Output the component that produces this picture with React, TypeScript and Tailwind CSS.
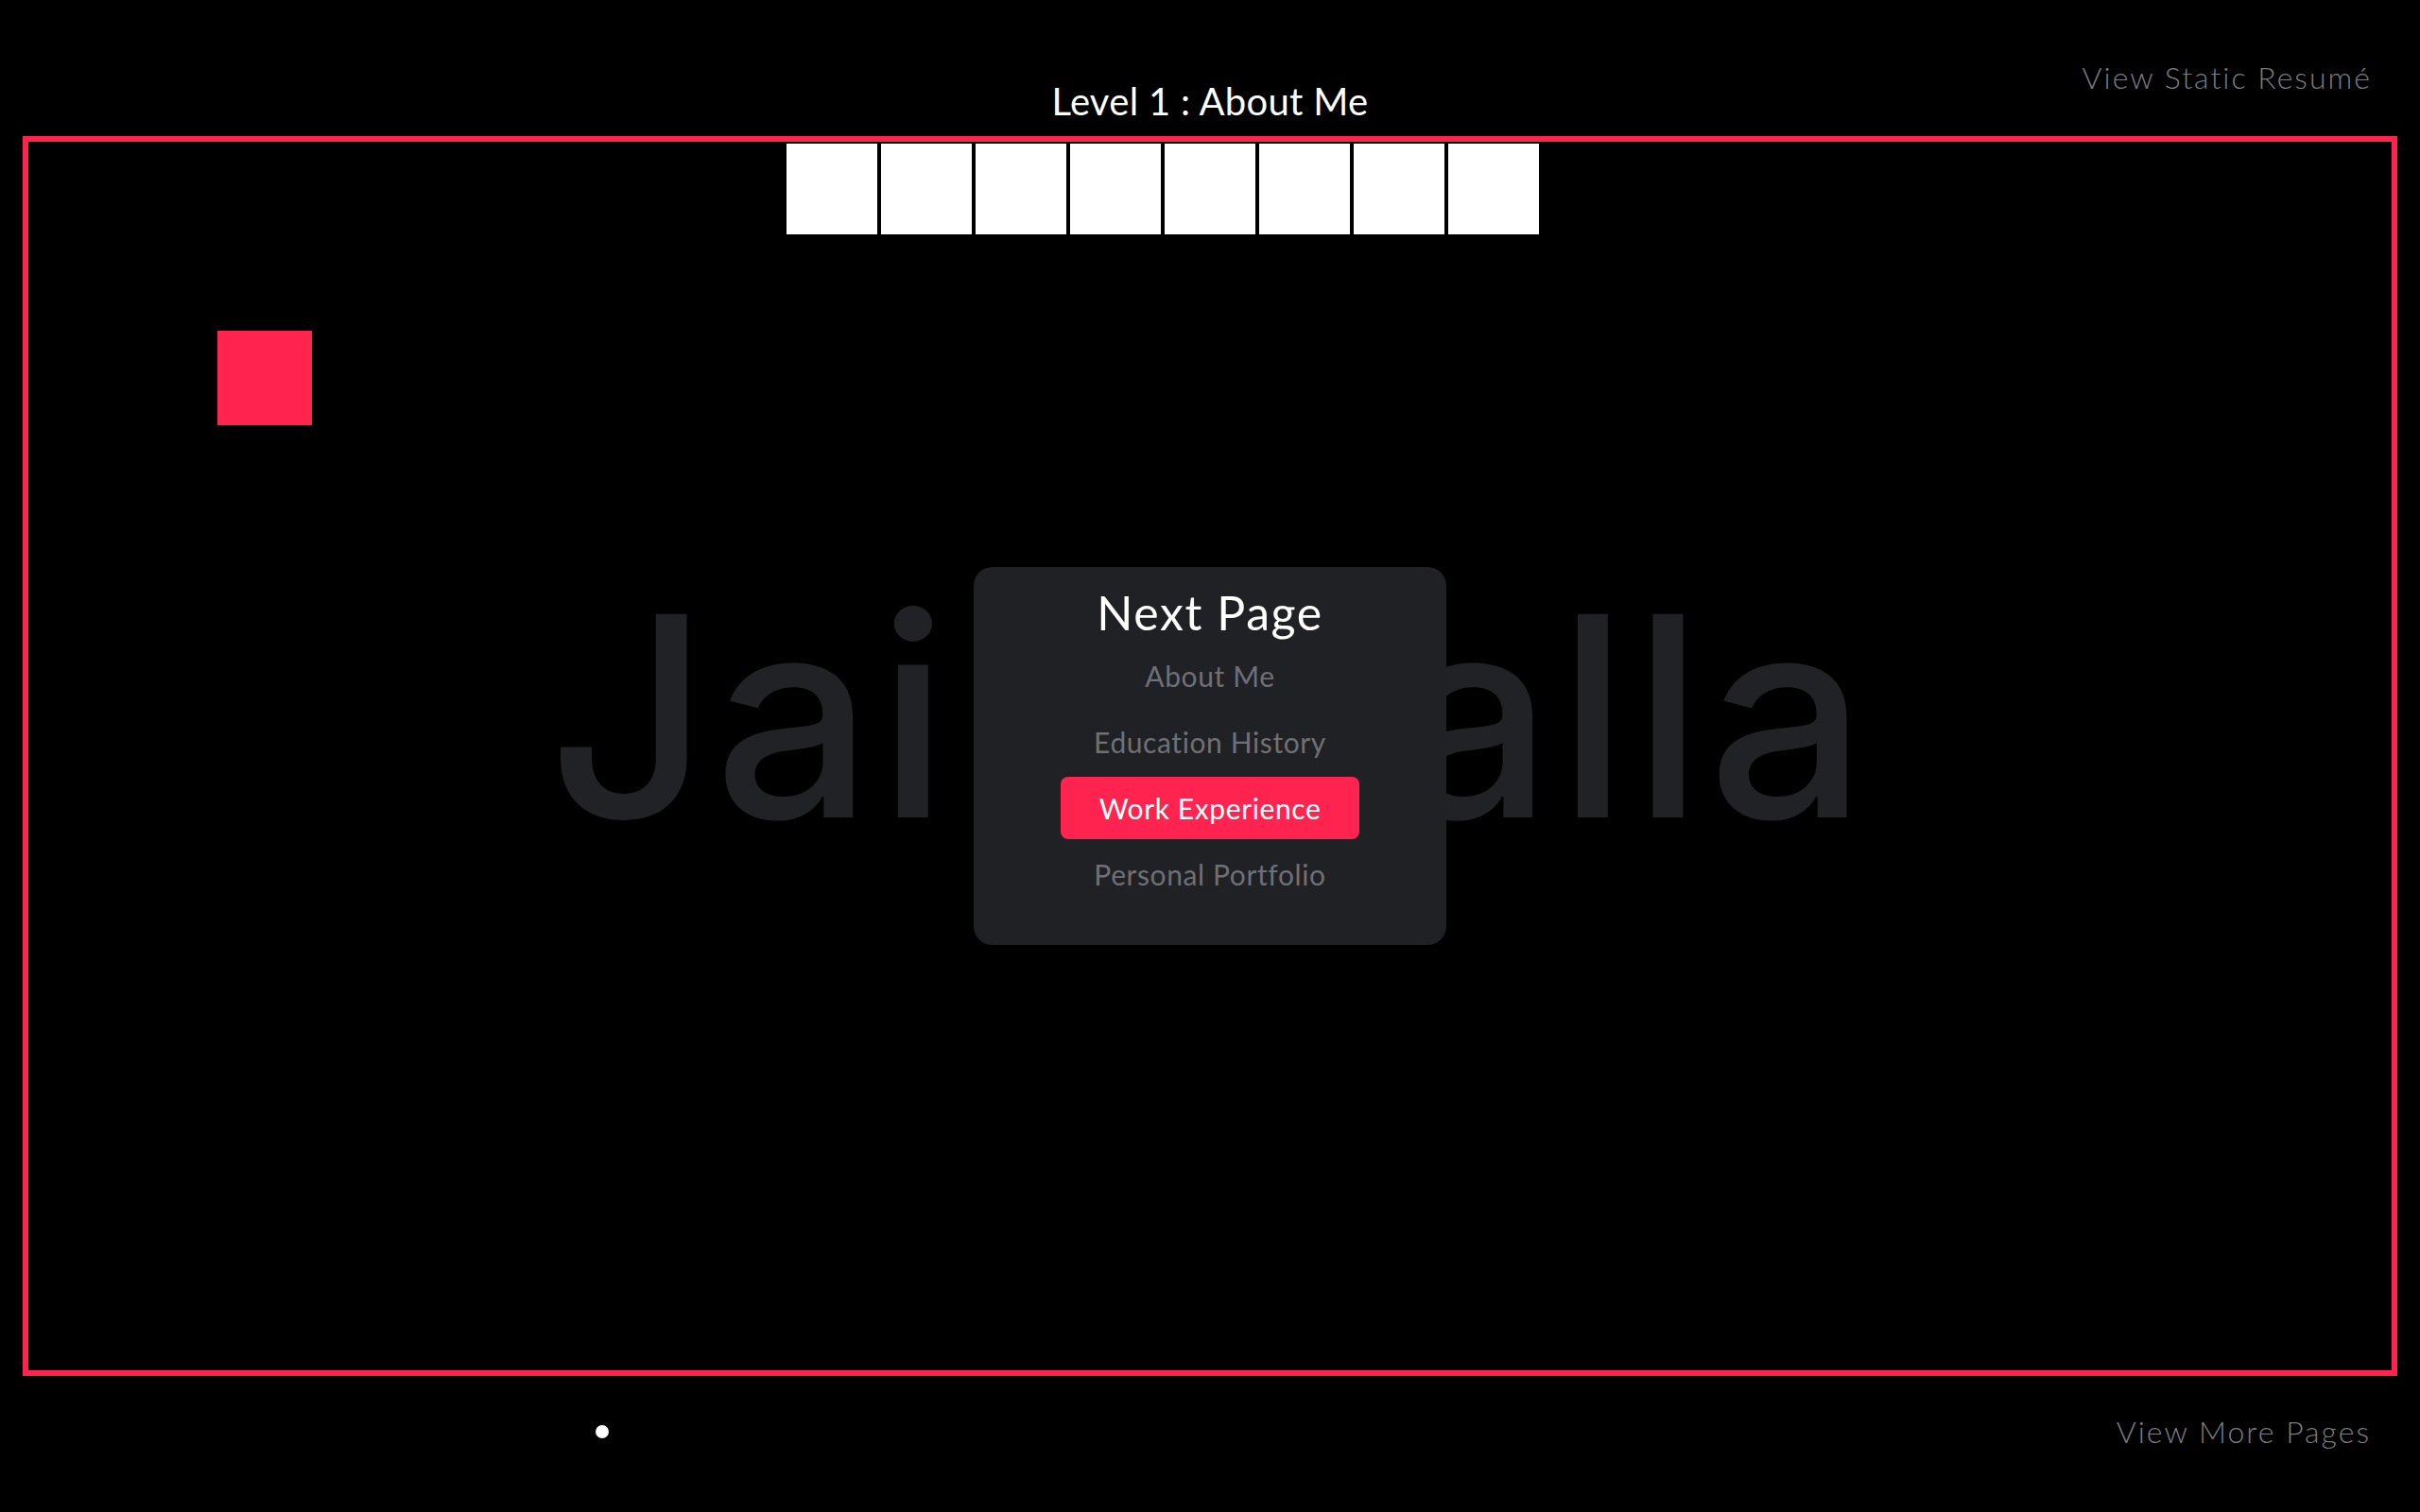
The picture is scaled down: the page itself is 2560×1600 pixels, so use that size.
const MENU = ['About Me', 'Education History', 'Work Experience', 'Personal Portfolio']
const ACTIVE = 'Work Experience'
const WALLS = 8

export default function App() {
  return (
    <div className="min-h-screen w-full bg-black font-['Lato',sans-serif] text-white">
      {/* Header */}
      <div className="grid h-[144px] grid-cols-[1fr_auto_1fr]">
        <div />
        <h1 className="mt-[83px] text-[40px] leading-[48px] tracking-[0.3px]">Level 1 : About Me</h1>
        <div className="flex justify-end pr-[51px] pt-[63px]">
          <a href="#" className="text-[32px] font-light leading-[38px] tracking-[2px] text-[#7c7c7e]">
            View Static Resumé
          </a>
        </div>
      </div>

      {/* Game board */}
      <div className="relative mx-[24px] flex h-[1312px] items-center justify-center overflow-hidden border-[6px] border-[#ff2450]">
        {/* walls */}
        <div className="absolute left-[802px] top-[2px] flex gap-[4px]">
          {Array.from({ length: WALLS }).map((_, i) => (
            <div key={i} className="h-[96px] w-[96px] bg-white" />
          ))}
        </div>

        {/* player */}
        <div className="absolute left-[200px] top-[200px] h-[100px] w-[100px] bg-[#ff2450]" />

        {/* name watermark */}
        <div className="mb-[86px] select-none whitespace-nowrap font-['Inter',sans-serif] text-[296px] font-medium leading-none tracking-[5px] text-[#212226]">
          Jai Bhalla
        </div>

        {/* next page menu */}
        <div className="absolute left-1/2 top-1/2 flex h-[400px] w-[500px] -translate-x-1/2 -translate-y-1/2 flex-col items-center gap-[4px] rounded-[20px] bg-[#202125] pt-[18px]">
          <h2 className="text-[50px] leading-[60px] tracking-[1.6px] text-white">Next Page</h2>
          {MENU.map((item) => (
            <button
              key={item}
              className={
                item === ACTIVE
                  ? 'flex h-[66px] w-[316px] items-center justify-center rounded-[8px] bg-[#ff2450] text-[30px] leading-[36px] tracking-[0.6px] text-white'
                  : 'flex h-[66px] w-[316px] items-center justify-center rounded-[8px] text-[30px] leading-[36px] tracking-[0.6px] text-[#6f7075]'
              }
            >
              {item}
            </button>
          ))}
        </div>
      </div>

      {/* Footer */}
      <div className="flex h-[118px] items-center justify-between pr-[52px]">
        <div className="ml-[630px] h-[14px] w-[14px] rounded-full bg-white" />
        <a href="#" className="text-[32px] font-light leading-[38px] tracking-[2px] text-[#7c7c7e]">
          View More Pages
        </a>
      </div>
    </div>
  )
}
